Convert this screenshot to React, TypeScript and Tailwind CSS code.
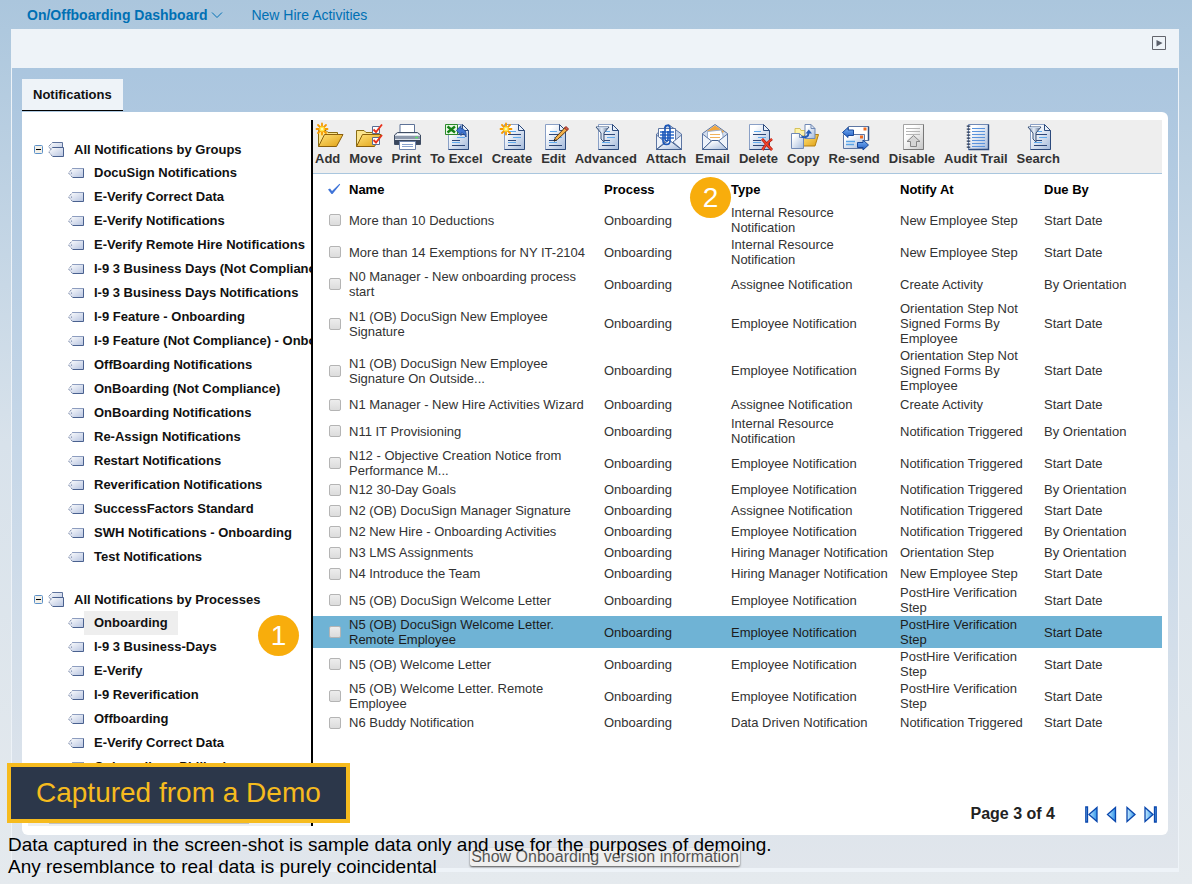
import type { ReactNode } from 'react';

interface TreeGroup {
  title: string;
  items: string[];
}

interface NotificationRow {
  name: string;
  type: string;
  notifyAt: string;
  dueBy: string;
}

const GROUPS: TreeGroup[] = [
  {
    title: 'All Notifications by Groups',
    items: [
      'DocuSign Notifications',
      'E-Verify Correct Data',
      'E-Verify Notifications',
      'E-Verify Remote Hire Notifications',
      'I-9 3 Business Days (Not Compliance)',
      'I-9 3 Business Days Notifications',
      'I-9 Feature - Onboarding',
      'I-9 Feature (Not Compliance) - Onboarding',
      'OffBoarding Notifications',
      'OnBoarding (Not Compliance)',
      'OnBoarding Notifications',
      'Re-Assign Notifications',
      'Restart Notifications',
      'Reverification Notifications',
      'SuccessFactors Standard',
      'SWH Notifications - Onboarding',
      'Test Notifications',
    ],
  },
  {
    title: 'All Notifications by Processes',
    items: [
      'Onboarding',
      'I-9 3 Business-Days',
      'E-Verify',
      'I-9 Reverification',
      'Offboarding',
      'E-Verify Correct Data',
      'Onboarding - Philippines',
    ],
  },
];

const SELECTED_ITEM = 'Onboarding';
const SELECTED_ROW = 14;

const ROWS: NotificationRow[] = [
  { name: 'More than 10 Deductions', type: 'Internal Resource Notification', notifyAt: 'New Employee Step', dueBy: 'Start Date' },
  { name: 'More than 14 Exemptions for NY IT-2104', type: 'Internal Resource Notification', notifyAt: 'New Employee Step', dueBy: 'Start Date' },
  { name: 'N0 Manager - New onboarding process start', type: 'Assignee Notification', notifyAt: 'Create Activity', dueBy: 'By Orientation' },
  { name: 'N1 (OB) DocuSign New Employee Signature', type: 'Employee Notification', notifyAt: 'Orientation Step Not Signed Forms By Employee', dueBy: 'Start Date' },
  { name: 'N1 (OB) DocuSign New Employee Signature On Outside...', type: 'Employee Notification', notifyAt: 'Orientation Step Not Signed Forms By Employee', dueBy: 'Start Date' },
  { name: 'N1 Manager - New Hire Activities Wizard', type: 'Assignee Notification', notifyAt: 'Create Activity', dueBy: 'Start Date' },
  { name: 'N11 IT Provisioning', type: 'Internal Resource Notification', notifyAt: 'Notification Triggered', dueBy: 'By Orientation' },
  { name: 'N12 - Objective Creation Notice from Performance M...', type: 'Employee Notification', notifyAt: 'Notification Triggered', dueBy: 'Start Date' },
  { name: 'N12 30-Day Goals', type: 'Employee Notification', notifyAt: 'Notification Triggered', dueBy: 'By Orientation' },
  { name: 'N2 (OB) DocuSign Manager Signature', type: 'Assignee Notification', notifyAt: 'Notification Triggered', dueBy: 'Start Date' },
  { name: 'N2 New Hire - Onboarding Activities', type: 'Employee Notification', notifyAt: 'Notification Triggered', dueBy: 'By Orientation' },
  { name: 'N3 LMS Assignments', type: 'Hiring Manager Notification', notifyAt: 'Orientation Step', dueBy: 'By Orientation' },
  { name: 'N4 Introduce the Team', type: 'Hiring Manager Notification', notifyAt: 'New Employee Step', dueBy: 'Start Date' },
  { name: 'N5 (OB) DocuSign Welcome Letter', type: 'Employee Notification', notifyAt: 'PostHire Verification Step', dueBy: 'Start Date' },
  { name: 'N5 (OB) DocuSign Welcome Letter. Remote Employee', type: 'Employee Notification', notifyAt: 'PostHire Verification Step', dueBy: 'Start Date' },
  { name: 'N5 (OB) Welcome Letter', type: 'Employee Notification', notifyAt: 'PostHire Verification Step', dueBy: 'Start Date' },
  { name: 'N5 (OB) Welcome Letter. Remote Employee', type: 'Employee Notification', notifyAt: 'PostHire Verification Step', dueBy: 'Start Date' },
  { name: 'N6 Buddy Notification', type: 'Data Driven Notification', notifyAt: 'Notification Triggered', dueBy: 'Start Date' },
];

/* Gradients shared by the toolbar, tree and pager icons */
function IconGradients() {
  return (
    <svg className="absolute h-0 w-0" aria-hidden="true">
      <defs>
        <linearGradient id="paper" x1="0" y1="0" x2="1" y2="1">
          <stop offset="0.2" stopColor="#ffffff" />
          <stop offset="1" stopColor="#a4badb" />
        </linearGradient>
        <linearGradient id="grey" x1="0" y1="0" x2="1" y2="1">
          <stop offset="0.3" stopColor="#ffffff" />
          <stop offset="1" stopColor="#c4c4c4" />
        </linearGradient>
        <linearGradient id="folder" x1="0" y1="0" x2="1" y2="1">
          <stop offset="0" stopColor="#ffe27a" />
          <stop offset="1" stopColor="#e0a012" />
        </linearGradient>
        <linearGradient id="tag" x1="0" y1="0" x2="1" y2="1">
          <stop offset="0" stopColor="#ffffff" />
          <stop offset="1" stopColor="#b6c3df" />
        </linearGradient>
        <linearGradient id="funnel" x1="0" y1="0" x2="1" y2="0">
          <stop offset="0" stopColor="#7c92b4" />
          <stop offset="0.45" stopColor="#e6eef8" />
          <stop offset="1" stopColor="#4d6489" />
        </linearGradient>
        <linearGradient id="arrow" x1="0" y1="0" x2="0" y2="1">
          <stop offset="0" stopColor="#7db4f5" />
          <stop offset="1" stopColor="#1f5cc4" />
        </linearGradient>
        <linearGradient id="pager" x1="0" y1="0" x2="1" y2="0">
          <stop offset="0" stopColor="#c9ecff" />
          <stop offset="1" stopColor="#2f93ea" />
        </linearGradient>
      </defs>
    </svg>
  );
}

function Icon({ children }: { children: ReactNode }) {
  return (
    <svg viewBox="0 0 28 28" className="-mx-2 h-7 w-7 overflow-visible" fill="none" aria-hidden="true">
      {children}
    </svg>
  );
}

/* Sheet with a folded corner, 20 x 25, starting at x */
function Sheet({ x }: { x: number }) {
  return (
    <g transform={`translate(${x} 2)`}>
      <path d="M.5 .5H14.500L20.500 6.500V25.500H.5Z" fill="url(#paper)" stroke="#8aa0c6" />
      <path d="M20.500 6.500V25.500H.5" stroke="#2c4a7c" />
      <path d="M14.500 .5V6.500H20.500Z" fill="#e8f0fb" stroke="#2c4a7c" />
      <path d="M4 10.500H17M4 16.500H12M4 21.500H17" stroke="#2d4778" />
      <path d="M5 7.500H12M9 13.500H17M4 18.500H12" stroke="#62abed" />
    </g>
  );
}

function Spark({ x, y }: { x: number; y: number }) {
  return (
    <g transform={`translate(${x} ${y})`} strokeLinecap="round">
      <path d="M0 -5.500V5.500M-5.500 0H5.500M-4 -4L4 4M-4 4L4 -4" stroke="#f59a00" strokeWidth="1.800" />
      <circle r="2.600" fill="#ffe94a" />
      <circle r="1.100" fill="#fffbd0" />
    </g>
  );
}

function FunnelSheet({ x }: { x: number }) {
  return (
    <g>
      <Sheet x={x + 2} />
      <path d={`M${x} 5H${x + 13}L${x + 8} 11V20L${x + 5} 17V11Z`} fill="url(#funnel)" stroke="#3b5379" />
      <path d={`M${x + 1} 5.500H${x + 12}`} stroke="#c9d8ec" />
    </g>
  );
}

function OpenFolder() {
  return (
    <>
      <path d="M4.500 24.500V8.500H12L14 10.500H23.500V13" fill="#fbe58e" stroke="#8a6d14" />
      <path d="M4.500 24.500L10.500 12.500H29L22.500 24.500Z" fill="url(#folder)" stroke="#8a5f0c" />
    </>
  );
}

const TOOLS: { label: string; icon: ReactNode }[] = [
  {
    label: 'Add',
    icon: (
      <Icon>
        <OpenFolder />
        <Spark x={8} y={7} />
      </Icon>
    ),
  },
  {
    label: 'Move',
    icon: (
      <Icon>
        <OpenFolder />
        <path d="M20.500 4.500H27.500V11.500H20.500ZM20.500 15.500H27.500V22.500H20.500Z" fill="#fff" stroke="#566d94" />
        <path d="M21.500 7.500L24 10L30 2.500M21.500 18L24 20.500L30 13" stroke="#e8321c" strokeWidth="1.900" />
      </Icon>
    ),
  },
  {
    label: 'Print',
    icon: (
      <Icon>
        <path d="M8 2.500H22.500V12H8Z" fill="#fff" stroke="#5d7297" />
        <path d="M5.500 10.500H25.500L28.500 13V22.500H2.500V13Z" fill="#dbe1ea" stroke="#3f4d63" />
        <path d="M3 14H28V17H3Z" fill="#8c98ab" />
        <path d="M3 18H28V22H3Z" fill="#39465c" />
        <path d="M5 12.500H26" stroke="#fff" />
        <path d="M23 15.500H26" stroke="#5fe06a" strokeWidth="1.500" />
        <path d="M7.500 19.500H23.500V27.500H7.500Z" fill="#fff" stroke="#6d83ab" />
        <path d="M10 22.500H21M10 24.500H21" stroke="#8aa3cd" />
      </Icon>
    ),
  },
  {
    label: 'To Excel',
    icon: (
      <Icon>
        <Sheet x={6} />
        <path d="M3.500 2.500H15.500V12.500H3.500Z" fill="#e9f7e6" stroke="#2b8a2b" />
        <path d="M5.500 4.500L13 10.500M13 4.500L5.500 10.500" stroke="#158217" strokeWidth="2.400" />
        <path d="M14.500 8.500L19 3.500V6.500C23 7 24.500 10 24 15C22.500 12 21.500 11 19 11V13.500Z" fill="#3f74cf" stroke="#24509b" />
      </Icon>
    ),
  },
  {
    label: 'Create',
    icon: (
      <Icon>
        <Sheet x={6} />
        <Spark x={8} y={7} />
      </Icon>
    ),
  },
  {
    label: 'Edit',
    icon: (
      <Icon>
        <Sheet x={6} />
        <path d="M15 19L16.500 15.500L26 5.500L28.500 8L18.500 17.500Z" fill="#f2b04a" stroke="#5b3b12" />
        <path d="M25.500 6L27 4.500L29.500 7L28 8.500Z" fill="#e7604d" stroke="#8c2416" />
        <path d="M15 19L15.500 17.500L16.500 18.500Z" fill="#222" stroke="#222" />
      </Icon>
    ),
  },
  {
    label: 'Advanced',
    icon: (
      <Icon>
        <FunnelSheet x={4} />
      </Icon>
    ),
  },
  {
    label: 'Attach',
    icon: (
      <Icon>
        <path d="M4.500 12L16.500 2.500L29.500 12V27.500H4.500Z" fill="#c7d4e8" stroke="#5d76a3" />
        <path d="M6.500 6.500H23.500V21H6.500Z" fill="#fff" stroke="#5d76a3" />
        <path d="M8 10H22M8 13H22M8 16H22" stroke="#2f6fcb" strokeWidth="1.300" />
        <path d="M4.500 13L13 20L4.500 27.500ZM29.500 13L21 20L29.500 27.500Z" fill="#eef3fa" stroke="#5d76a3" />
        <path d="M4.500 27.500L17 18L29.500 27.500Z" fill="url(#paper)" stroke="#43608f" />
        <path d="M11 9V19C11 23.500 18 23.500 18 19V6C18 2.500 13 2.500 13 6V17C13 19.500 16 19.500 16 17V9" stroke="#1a56b8" strokeWidth="1.600" />
      </Icon>
    ),
  },
  {
    label: 'Email',
    icon: (
      <Icon>
        <path d="M3.500 11.500L16 2.500L28.500 11.500V27.500H3.500Z" fill="#d4deed" stroke="#5d76a3" />
        <path d="M8 9L16 3.500L25 9.500L23 12H9Z" fill="#f3a63b" />
        <path d="M8.500 9.500L22 8L24 13V20H8.500Z" fill="#fff" stroke="#9db1d0" />
        <path d="M11 12.500H21M11 15.500H21" stroke="#f0b25d" />
        <path d="M3.500 12L12.500 19L3.500 27.500ZM28.500 12L19.500 19L28.500 27.500Z" fill="#eef3fa" stroke="#5d76a3" />
        <path d="M3.500 27.500L13 18.500H19L28.500 27.500Z" fill="url(#paper)" stroke="#43608f" />
      </Icon>
    ),
  },
  {
    label: 'Delete',
    icon: (
      <Icon>
        <Sheet x={5} />
        <path d="M18 17C21 20 25 25 28 28M28 17C24 20 20 25 18.500 28" stroke="#b3170a" strokeWidth="2.800" />
        <path d="M18 17C21 20 25 25 28 28M28 17C24 20 20 25 18.500 28" stroke="#f1452d" strokeWidth="1.400" />
      </Icon>
    ),
  },
  {
    label: 'Copy',
    icon: (
      <Icon>
        <path d="M6 6.500H11L12 8.500H16V14H6Z" fill="#fdf2a8" stroke="#d6c25a" />
        <path d="M14.500 24V15L16 12.500H29.500L26 24Z" fill="url(#folder)" stroke="#b57f10" />
        <path d="M2.500 11.500H10.500L14.500 15.500V26.500H2.500Z" fill="url(#paper)" stroke="#7089b5" />
        <path d="M10.500 11.500V15.500H14.500" stroke="#7089b5" />
        <path d="M16 2.500H22L26 6.500V16.500H16Z" fill="url(#paper)" stroke="#7089b5" />
        <path d="M22 2.500V6.500H26" stroke="#7089b5" />
        <path d="M12.500 14.500C17 16.500 19.500 14 19.500 11" stroke="#255cb5" strokeWidth="2" />
        <path d="M16.500 11.500L19.800 7.500L23 11.500Z" fill="#255cb5" />
      </Icon>
    ),
  },
  {
    label: 'Re-send',
    icon: (
      <Icon>
        <path d="M8.500 4.500H28.500V18.500H8.500Z" fill="#fff" stroke="#5d76a3" />
        <path d="M28.500 4.500V18.500" stroke="#2c4a7c" strokeWidth="1.500" />
        <path d="M23.500 5.500H26.500V8.500H23.500Z" fill="#ef6a1f" />
        <path d="M3.500 12.500H24.500V26.500H3.500Z" fill="url(#paper)" stroke="#5d76a3" />
        <path d="M20 13.500H23V16.500H20Z" fill="#ef6a1f" />
        <path d="M6 19.500H15M6 22.500H14" stroke="#59a4e8" strokeWidth="1.300" />
        <path d="M2.500 10.500L8 5.500V8H13.500V13.500H8V15.500Z" fill="url(#arrow)" stroke="#174799" />
        <path d="M28.500 23L23 18V20.500H17.500V25.500H23V28Z" fill="url(#arrow)" stroke="#174799" />
      </Icon>
    ),
  },
  {
    label: 'Disable',
    icon: (
      <Icon>
        <path d="M5.500 2.500H25.500V27.500H5.500Z" fill="url(#grey)" stroke="#a3a3a3" />
        <path d="M25.500 2.500V27.500H5.500" stroke="#777" />
        <path d="M8 6.500H22M8 9.500H22M8 12.500H22" stroke="#b5b5b5" />
        <path d="M15.500 13.500L22 19.500H18.500V24.500H12.500V19.500H9Z" fill="#d5d5d5" stroke="#858585" />
      </Icon>
    ),
  },
  {
    label: 'Audit Trail',
    icon: (
      <Icon>
        <path d="M6.500 2.500H26.500V27.500H6.500Z" fill="url(#paper)" stroke="#7089b5" />
        <path d="M26.500 2.500V27.500H6.500" stroke="#2c4a7c" strokeWidth="1.400" />
        <path d="M10 6.500H23M10 9.500H23M10 12.500H23M10 15.500H23M10 18.500H23M10 21.500H23M10 24.500H23" stroke="#5a93dc" />
        <path d="M6.500 3.500V27" stroke="#26344f" strokeWidth="3.500" strokeDasharray="1.300 1.700" />
      </Icon>
    ),
  },
  {
    label: 'Search',
    icon: (
      <Icon>
        <FunnelSheet x={4} />
      </Icon>
    ),
  },
];

function TagIcon() {
  return (
    <svg viewBox="0 0 16 10" className="h-[10px] w-4 shrink-0" fill="none" aria-hidden="true">
      <path d="M4.500 .5H15.500V9.500H4.500L.5 5Z" fill="url(#tag)" />
      <path d="M4.500 .5L.5 5L4.500 9.500" stroke="#4d608a" strokeDasharray="1 1" />
      <path d="M4.500 .5H15.500" stroke="#8d9dbf" />
      <path d="M15.500 .5V9.500H4.500" stroke="#4a618f" />
      <circle cx="3.500" cy="5" r=".6" fill="#4a618f" />
    </svg>
  );
}

function TagStackIcon() {
  return (
    <svg viewBox="0 0 16 15" className="h-[15px] w-4 shrink-0" fill="none" aria-hidden="true">
      <path d="M4.500 .5H14.500V9H4.500L.5 4.500Z" fill="url(#tag)" />
      <path d="M4.500 .5L.5 4.500L3 7.500" stroke="#4d608a" strokeDasharray="1 1" />
      <path d="M4.500 .5H14.500V5.500" stroke="#5f739d" />
      <path d="M4.500 5.500H15.500V14.500H4.500L.8 10Z" fill="url(#tag)" />
      <path d="M4.500 5.500L.8 10L4.500 14.500" stroke="#4d608a" strokeDasharray="1 1" />
      <path d="M4.500 5.500H15.500V14.500H4.500" stroke="#4a618f" />
    </svg>
  );
}

function CollapseIcon() {
  return (
    <svg viewBox="0 0 9 9" className="h-[9px] w-[9px]" fill="none" aria-hidden="true">
      <rect x=".5" y=".5" width="8" height="8" rx="1" fill="#f3f0e8" stroke="#5b90c8" />
      <path d="M2 4.500H7" stroke="#000" />
    </svg>
  );
}

function StepBadge({ value, className }: { value: number; className: string }) {
  return (
    <span
      className={`absolute z-10 flex h-[41px] w-[41px] items-center justify-center rounded-full bg-[#f8ad0c] text-[28px] font-normal text-white ${className}`}
    >
      {value}
    </span>
  );
}

function NotificationTree() {
  return (
    <nav className="ml-[6px] flex w-[285px] shrink-0 flex-col overflow-hidden border-r-2 border-black" aria-label="Notification groups">
      <div className="flex min-h-0 flex-1 flex-col gap-[18px] overflow-hidden pt-[17px]">
        {GROUPS.map((group) => (
          <section key={group.title} className="shrink-0">
            <div className="flex h-6 items-center pl-[6px]">
              <button type="button" aria-label={`Collapse ${group.title}`}>
                <CollapseIcon />
              </button>
              <span className="ml-[5px] flex items-center gap-[10px]">
                <TagStackIcon />
                <h2 className="font-bold whitespace-nowrap">{group.title}</h2>
              </span>
            </div>
            <ul>
              {group.items.map((item) => {
                const selected = item === SELECTED_ITEM;
                return (
                  <li key={item} className="relative flex h-6 items-center pl-10">
                    <TagIcon />
                    <a
                      href="#"
                      className={`px-[10px] leading-6 font-bold whitespace-nowrap ${selected ? 'bg-[#eeeeee]' : ''}`}
                    >
                      {item}
                    </a>
                    {selected && <StepBadge value={1} className="top-1 left-[230px]" />}
                  </li>
                );
              })}
            </ul>
          </section>
        ))}
      </div>
      {/* Horizontal scroll track */}
      <div className="h-[3px] shrink-0 bg-[#eeeeee] px-[21px]">
        <div className="h-px w-[200px] bg-[#c1c1c1]" />
      </div>
    </nav>
  );
}

function Toolbar() {
  return (
    <div className="flex gap-[9px] border-b border-[#a9c6de] bg-[#eeeeee] pt-[2px] pb-[7px] pl-[2px]">
      {TOOLS.map((tool) => (
        <button
          key={tool.label}
          type="button"
          className="flex shrink-0 flex-col items-center gap-px font-bold whitespace-nowrap text-[#333333]"
        >
          {tool.icon}
          <span className="leading-[15px]">{tool.label}</span>
        </button>
      ))}
    </div>
  );
}

function NotificationTable() {
  return (
    <table className="w-full table-fixed text-left leading-[15px]">
      <colgroup>
        <col className="w-9" />
        <col className="w-[255px]" />
        <col className="w-[127px]" />
        <col className="w-[169px]" />
        <col className="w-36" />
        <col />
      </colgroup>
      <thead>
        <tr className="h-[30px] font-bold text-black">
          <th className="pl-[14px]">
            <svg viewBox="0 0 14 12" className="h-3 w-[14px]" fill="none" role="img" aria-label="Select">
              <path d="M1 6.500L3 5.500L5 8L12.500 .8L13.200 1.500L5.500 11H4.500Z" fill="#3f74d8" />
            </svg>
          </th>
          <th>Name</th>
          <th>Process</th>
          <th className="relative">
            <StepBadge value={2} className="top-[3px] -left-[41px]" />
            Type
          </th>
          <th>Notify At</th>
          <th>Due By</th>
        </tr>
      </thead>
      <tbody>
        {ROWS.map((row, index) => (
          <tr
            key={row.name}
            className={`h-[21px] ${index === SELECTED_ROW ? 'bg-[#6fb3d5] text-[#1c1c1c]' : 'text-[#333333]'}`}
          >
            <td className="pl-4">
              <input
                type="checkbox"
                aria-label={row.name}
                className="block h-3 w-3 appearance-none rounded-[2px] border border-[#b4b4b4] bg-linear-to-b from-[#ededed] to-[#dcdcdc]"
              />
            </td>
            <td className="py-px pr-2">{row.name}</td>
            <td className="py-px">Onboarding</td>
            <td className="py-px pr-2">{row.type}</td>
            <td className="py-px pr-2">{row.notifyAt}</td>
            <td className="py-px">{row.dueBy}</td>
          </tr>
        ))}
      </tbody>
    </table>
  );
}

function Pager() {
  return (
    <div className="mt-auto flex items-center justify-end gap-[30px] pr-[5px] pb-[2px]">
      <span className="text-base leading-5 font-bold text-[#222222]">Page 3 of 4</span>
      <div className="flex gap-2">
        <button type="button" aria-label="First page">
          <svg viewBox="0 0 13 17" className="h-[17px] w-[13px]" fill="url(#pager)" stroke="#0a47ad" strokeWidth="1.300">
            <path d="M.8 1H2.500V16H.8Z" />
            <path d="M12 1.500V15.500L4 8.500Z" />
          </svg>
        </button>
        <button type="button" aria-label="Previous page">
          <svg viewBox="0 0 11 17" className="h-[17px] w-[11px]" fill="url(#pager)" stroke="#0a47ad" strokeWidth="1.300">
            <path d="M9.500 1.500V15.500L1.500 8.500Z" />
          </svg>
        </button>
        <button type="button" aria-label="Next page">
          <svg viewBox="0 0 11 17" className="h-[17px] w-[11px]" fill="url(#pager)" stroke="#0a47ad" strokeWidth="1.300">
            <path d="M2 1.500V15.500L10 8.500Z" />
          </svg>
        </button>
        <button type="button" aria-label="Last page">
          <svg viewBox="0 0 13 17" className="h-[17px] w-[13px]" fill="url(#pager)" stroke="#0a47ad" strokeWidth="1.300">
            <path d="M1 1.500V15.500L9 8.500Z" />
            <path d="M10.500 1H12.200V16H10.500Z" />
          </svg>
        </button>
      </div>
    </div>
  );
}

export default function App() {
  return (
    <div className="relative flex h-screen flex-col overflow-hidden bg-linear-to-b from-[#abc6dd] via-[#d8e2eb] via-50% to-[#e5eaee] pb-3 font-['Liberation_Sans',Arial,sans-serif] text-[13px] leading-[15px] text-[#111111]">
      <IconGradients />

      {/* Top navigation */}
      <header className="flex h-[29px] shrink-0 items-center gap-7 pl-[27px] text-sm text-[#0070b4]">
        <button type="button" className="flex items-center gap-1 font-bold">
          On/Offboarding Dashboard
          <svg viewBox="0 0 12 8" className="h-2 w-3" fill="none" stroke="currentColor" aria-hidden="true">
            <path d="M1 1.500L6 6.500L11 1.500" />
          </svg>
        </button>
        <a href="#">New Hire Activities</a>
      </header>

      <main className="mr-[13px] ml-[11px] flex min-h-0 flex-1 flex-col border-x border-b-4 border-[#eef3f8] bg-linear-to-b from-[#a8c4de] via-[#c6d7e8] via-50% to-[#e1e6ec]">
        <div className="flex h-[39px] shrink-0 justify-end bg-[#eef3f8] pt-[7px] pr-3">
          <button type="button" aria-label="Show panel" className="h-[14px] w-[14px]">
            <svg viewBox="0 0 14 14" fill="none" aria-hidden="true">
              <path d="M.5 .5H13.500V13.500H.5Z" stroke="#62646c" />
              <path d="M4.500 4L10.500 7L4.500 10.500Z" fill="#5a5f6a" />
            </svg>
          </button>
        </div>

        <div className="flex shrink-0 pt-[11px] pl-[10px]">
          <button type="button" className="mb-px h-8 border-b border-black bg-[#eef3f8] px-[11px] font-bold">
            Notifications
          </button>
        </div>

        <div className="mr-[10px] ml-[10px] flex min-h-0 flex-1 rounded-r-md rounded-bl-md bg-white pt-2 pb-[9px]">
          <NotificationTree />
          <div className="mr-[6px] flex min-w-0 flex-1 flex-col overflow-hidden">
            <Toolbar />
            <NotificationTable />
            <Pager />
          </div>
        </div>

        <footer className="flex h-[33px] shrink-0 items-end justify-center pb-[2px] pl-5">
          <button
            type="button"
            className="h-[18px] rounded-[2px] bg-[#efefef] px-px text-base leading-[18px] text-[#555555] shadow-[0_1px_2px_#555555]"
          >
            Show Onboarding version information
          </button>
        </footer>
      </main>

      {/* Demo notice laid over the page */}
      <aside className="absolute bottom-[6px] left-[7px] z-20 text-[19px] leading-[22px] text-black">
        <p className="mb-[11px] w-fit border-4 border-[#f6bb1e] bg-[#2c374a] px-[25px] text-[28px] leading-[52px] text-[#f6bb1e]">
          Captured from a Demo
        </p>
        <p className="pl-px">Data captured in the screen-shot is sample data only and use for the purposes of demoing.</p>
        <p className="pl-px">Any resemblance to real data is purely coincidental</p>
      </aside>
    </div>
  );
}
